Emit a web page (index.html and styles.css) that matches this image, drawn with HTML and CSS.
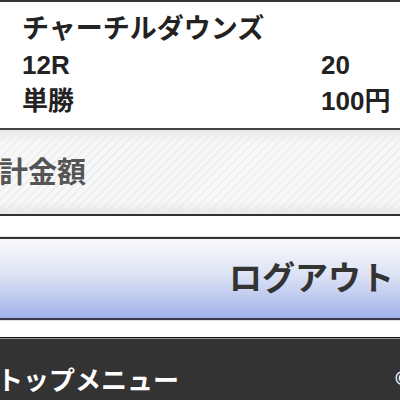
FILE: index.html
```html
<!DOCTYPE html>
<html lang="ja">
<head>
  <meta charset="UTF-8" />
  <meta name="viewport" content="width=device-width, initial-scale=1.0" />
  <title>投票確認</title>
  <link rel="stylesheet" href="styles.css">
</head>
<body>
  <div class="ticket">
    <div class="race">チャーチルダウンズ</div>
    <div class="row"><span>12R</span><span>20</span></div>
    <div class="row"><span>単勝</span><span>100円</span></div>
  </div>

  <div class="total">合計金額</div>

  <div class="space"></div>

  <button type="button" class="logout">ログアウト</button>

  <div class="space bottom"></div>

  <div class="footer">
    <span>トップメニュー</span>
    <span class="copy">©</span>
  </div>
</body>
</html>
```

FILE: styles.css
```css
html, body {
  height: 400px;
}
body {
  margin: 0;
  font-family: "Liberation Sans", "Noto Sans CJK JP", sans-serif;
  background: #fff;
  color: #222;
  overflow: hidden;
}
.ticket {
  border-top: 2px solid #333;
  border-bottom: 2px solid #444;
  padding: 9px 0 7px 22px;
  height: 110px;
  font-weight: bold;
}
.race {
  font-size: 27px;
  line-height: 36px;
}
.row {
  display: grid;
  grid-template-columns: 299px auto;
  font-size: 26px;
  line-height: 36px;
}
.row:first-of-type {
  margin-top: 1px;
}
.total {
  height: 84px;
  border-bottom: 2px solid #333;
  background:
    linear-gradient(#e9e9e9, rgba(255,255,255,0) 16%, rgba(255,255,255,0) 84%, #e8e8e8),
    repeating-linear-gradient(135deg, #f8f8f8 0 4px, #efefef 4px 6px);
  font-size: 29px;
  font-weight: bold;
  color: #555;
  line-height: 86px;
  margin-left: -30px;
}
.space {
  height: 20px;
  border-bottom: 1px solid #e4e4e4;
}
.space.bottom {
  height: 16px;
  border-bottom: none;
  border-top: 1px solid #e0e0e8;
}
.logout {
  display: block;
  width: 100%;
  height: 83px;
  margin: 0;
  border: none;
  border-top: 2px solid #333;
  border-bottom: 2px solid #3a3a44;
  background: linear-gradient(#fafafb, #dde3f5 45%, #a2b2ea);
  font-family: inherit;
  font-size: 33px;
  font-weight: bold;
  color: #333;
  text-align: right;
  padding: 0 6px 6px 0;
}
.footer {
  border-top: 1px solid #111;
  box-shadow: inset 0 1px 0 #999;
  background: #333;
  height: 80px;
  color: #fff;
  font-size: 26px;
  font-weight: bold;
  display: flex;
  justify-content: space-between;
  align-items: center;
  margin-left: -3px;
  padding-bottom: 4px;
}
.copy {
  font-size: 20px;
  margin-right: -10px;
}
```
